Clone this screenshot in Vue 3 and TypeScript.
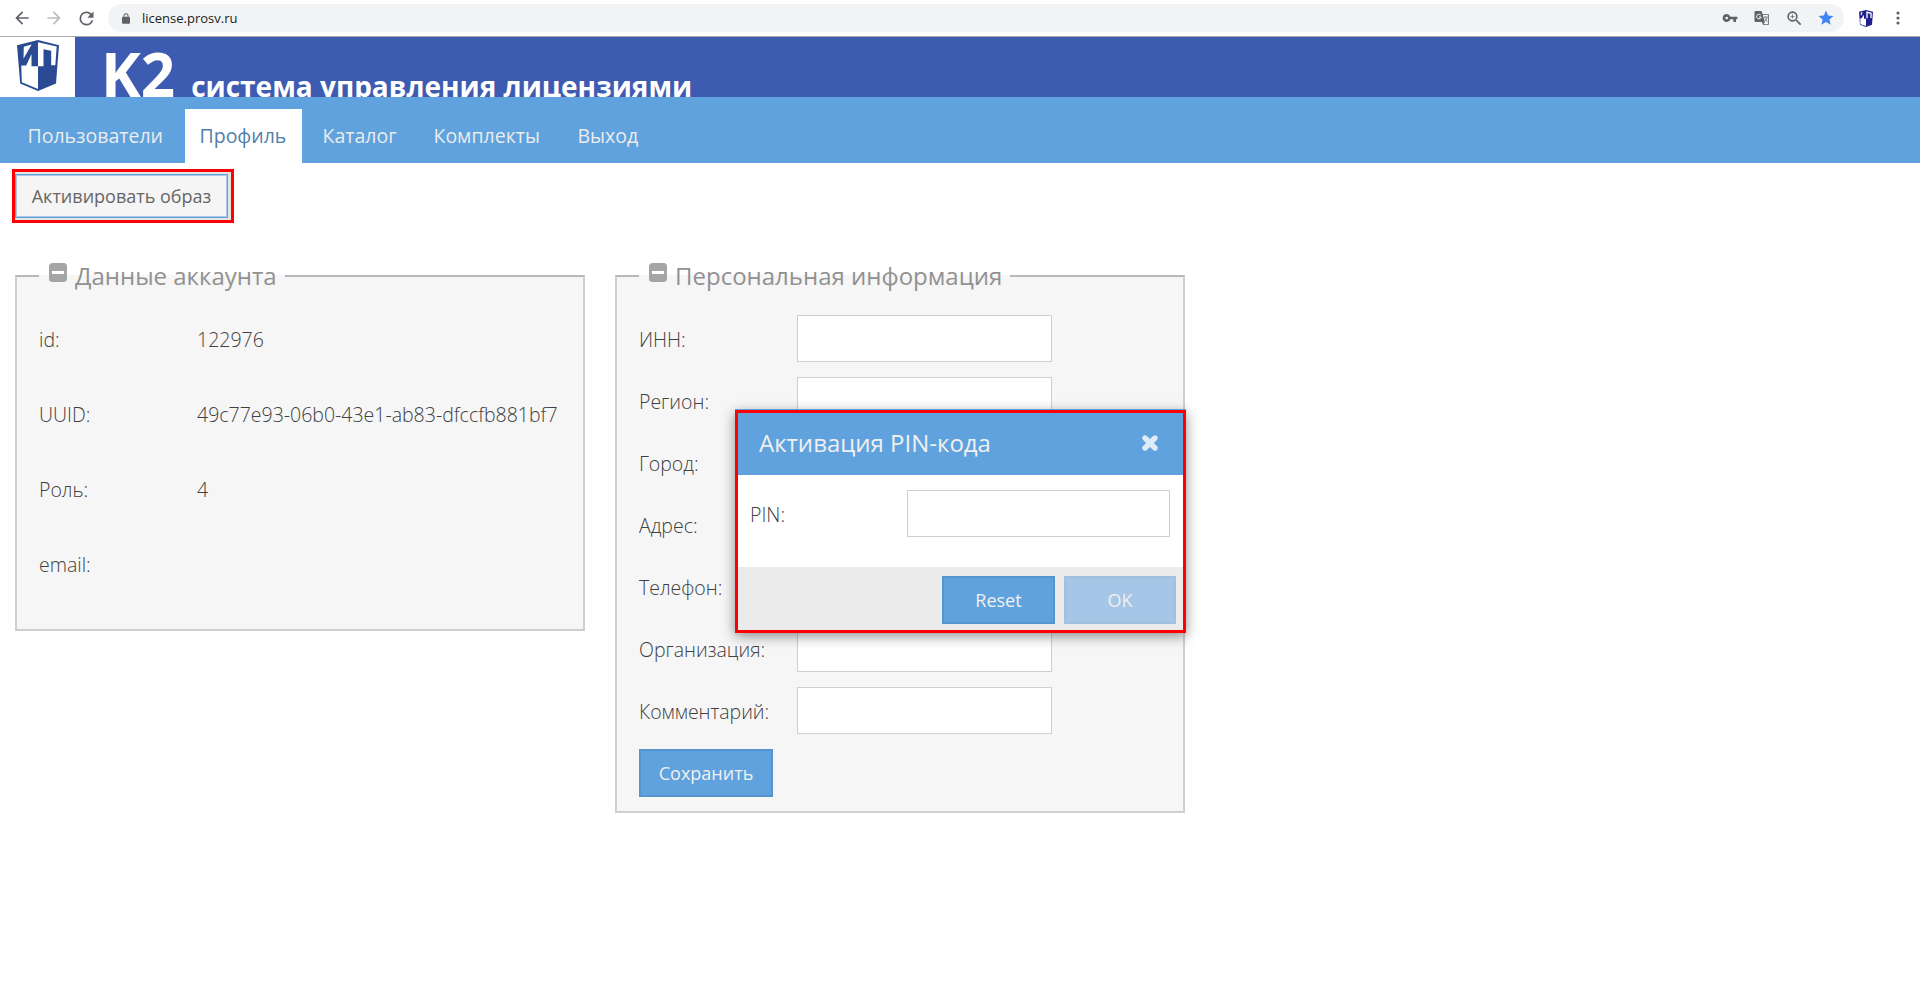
<script setup lang="ts">
interface Row {
  label: string
  value: string
}

const tabs: string[] = ['Пользователи', 'Профиль', 'Каталог', 'Комплекты', 'Выход']
const activeTab = 'Профиль'

const account: Row[] = [
  { label: 'id:', value: '122976' },
  { label: 'UUID:', value: '49c77e93-06b0-43e1-ab83-dfccfb881bf7' },
  { label: 'Роль:', value: '4' },
  { label: 'email:', value: '' },
]

const fields: string[] = ['ИНН:', 'Регион:', 'Город:', 'Адрес:', 'Телефон:', 'Организация:', 'Комментарий:']
</script>

<template>
  <div class="page">
    <div class="browser">
      <svg class="ic back" viewBox="0 0 24 24"><path d="M20 11H7.83l5.59-5.59L12 4l-8 8 8 8 1.41-1.41L7.83 13H20v-2z" /></svg>
      <svg class="ic fwd" viewBox="0 0 24 24"><path d="M4 11h12.17l-5.59-5.59L12 4l8 8-8 8-1.41-1.41L16.17 13H4v-2z" /></svg>
      <svg class="ic reload" viewBox="0 0 24 24"><path d="M17.65 6.35A7.96 7.96 0 0 0 12 4a8 8 0 1 0 7.73 10h-2.08A6 6 0 1 1 12 6c1.66 0 3.14.69 4.22 1.78L13 11h7V4l-2.35 2.35z" /></svg>
      <div class="omnibox">
        <svg class="lock" viewBox="0 0 16 21"><path d="M14 7h-1V5A5 5 0 0 0 3 5v2H2a2 2 0 0 0-2 2v10a2 2 0 0 0 2 2h12a2 2 0 0 0 2-2V9a2 2 0 0 0-2-2zM4.900 7V5a3.100 3.100 0 0 1 6.200 0v2z" /></svg>
        <span class="url">license.prosv.ru</span>
        <svg class="ext key" viewBox="0 0 24 24"><path d="M12.65 10A5.99 5.99 0 0 0 7 6a6 6 0 1 0 5.650 8H17v4h4v-4h2v-4H12.650zM7 14a2 2 0 1 1 0-4 2 2 0 0 1 0 4z" /></svg>
        <svg class="ext translate" viewBox="0 0 16 16">
          <path d="M1.500 1h6l1 3H14a1 1 0 0 1 1 1v9a1 1 0 0 1-1 1H9l-1-3H1.500a1 1 0 0 1-1-1V2a1 1 0 0 1 1-1z" />
          <path d="M8.900 4.800h5.300v9.400H9.500l1.300-2z" fill="#f1f3f4" />
          <path d="M6.700 5.100A2.300 2.300 0 1 0 7.200 7H5" fill="none" stroke="#f1f3f4" stroke-width="1" />
          <path d="M10 7.200h3.800M11.900 6.200v1M13.100 7.500c-.3 1.600-1.300 2.800-2.500 3.500M10.800 8.500c.5 1 1.500 2.200 2.700 3" fill="none" stroke="#5f6368" stroke-width=".8" />
        </svg>
        <svg class="ext zoom" viewBox="0 0 24 24"><path d="M15.500 14h-.79l-.28-.27A6.500 6.500 0 1 0 13.730 14.430l.27.280v.79l5 4.990L20.490 19zM9.500 14a4.500 4.500 0 1 1 0-9 4.500 4.500 0 0 1 0 9zM12 10h-2v2H9v-2H7V9h2V7h1v2h2z" /></svg>
        <svg class="ext star" viewBox="0 0 24 24"><path d="M12 17.270 18.180 21l-1.640-7.030L22 9.240l-7.190-.61L12 2 9.190 8.630 2 9.240l5.460 4.730L5.820 21z" /></svg>
      </div>
      <svg class="shield-small" viewBox="0 0 42 51">
        <path d="M0 5 21 0l21 5-3 39-18 7-18-7z" fill="#20208c" />
        <path d="M4 25v18l17 5V26h-6V14L8 25zM5 8l6-2-5 13zM22 4l16 4v16h-4V11l-8-1v15h-4z" fill="#fff" />
      </svg>
      <svg class="dots" viewBox="0 0 4 14"><circle cx="2" cy="2" r="1.600" /><circle cx="2" cy="7" r="1.600" /><circle cx="2" cy="12" r="1.600" /></svg>
    </div>

    <header class="header">
      <div class="logo">
        <svg class="shield" viewBox="0 0 42 51">
          <path d="M0 5.200 21 0l21 5.200-3 38.300L21 51 3.200 43.500z" fill="#2a4b94" />
          <path d="M4.300 25.400H9.200L14.500 14v12.300H21V49L4.800 42.300zM6.800 6.700 14.600 4.600 6.500 18.700z" fill="#fff" />
          <path d="M21 2.300 39.700 6.600 38.300 25.300H34.200V10.800L26.500 9.300V26.300H21z" fill="#fff" />
        </svg>
      </div>
      <h1 class="brand"><span class="k2">K2</span><span class="tagline">система управления лицензиями</span></h1>
    </header>

    <nav class="nav">
      <a v-for="tab in tabs" :key="tab" class="tab" :class="{ active: tab === activeTab }">{{ tab }}</a>
    </nav>

    <main class="main">
      <div class="highlight">
        <button class="activate">Активировать образ</button>
      </div>

      <div class="panels">
        <fieldset class="panel account">
          <legend>
            <svg class="toggle" viewBox="0 0 18 19"><rect width="18" height="19" rx="3.500" fill="#a5a5a5" /><rect x="3" y="8" width="12" height="3" fill="#fff" /></svg>
            <span>Данные аккаунта</span>
          </legend>
          <div v-for="row in account" :key="row.label" class="row">
            <span class="label">{{ row.label }}</span>
            <span class="value">{{ row.value }}</span>
          </div>
        </fieldset>

        <fieldset class="panel personal">
          <legend>
            <svg class="toggle" viewBox="0 0 18 19"><rect width="18" height="19" rx="3.500" fill="#a5a5a5" /><rect x="3" y="8" width="12" height="3" fill="#fff" /></svg>
            <span>Персональная информация</span>
          </legend>
          <div v-for="field in fields" :key="field" class="row">
            <label class="label">{{ field }}</label>
            <input class="input" type="text" />
          </div>
          <button class="btn save">Сохранить</button>
        </fieldset>
      </div>
    </main>

    <div class="dialog">
      <div class="dialog-head">
        <span>Активация PIN-кода</span>
        <svg class="close" viewBox="0 0 18 18"><path d="M4 4 14 14M14 4 4 14" stroke="#dfebf7" stroke-width="5.400" stroke-linecap="round" /></svg>
      </div>
      <div class="dialog-body">
        <label class="label">PIN:</label>
        <input class="input" type="text" />
      </div>
      <div class="dialog-foot">
        <button class="btn">Reset</button>
        <button class="btn disabled">OK</button>
      </div>
    </div>
  </div>
</template>

<style>
body {
  margin: 0;
  background: #fff;
}
</style>

<style scoped>
.page {
  width: 1920px;
  height: 1006px;
  overflow: hidden;
  position: relative;
  font-family: 'Open Sans', 'Noto Sans', sans-serif;
  color: #404040;
}
.page * {
  box-sizing: border-box;
}
.browser {
  height: 37px;
  display: flex;
  align-items: center;
  border-bottom: 1px solid #a9a9a9;
  background: #fff;
}
svg {
  display: block;
  flex: none;
}
.ic {
  width: 20px;
  height: 20px;
  fill: #5f6368;
}
.back {
  margin-left: 12px;
}
.fwd {
  margin-left: 12px;
  fill: #babcbe;
}
.reload {
  margin-left: 12px;
  width: 21px;
  height: 21px;
}
.omnibox {
  margin-left: 11px;
  width: 1736px;
  height: 28px;
  border-radius: 14px;
  background: #f1f3f4;
  display: flex;
  align-items: center;
  padding: 0 12px 0 14px;
}
.lock {
  width: 8px;
  height: 11px;
  fill: #5f6368;
}
.url {
  flex: 1;
  margin-left: 12px;
  font-size: 13px;
  line-height: 18px;
  color: #202124;
}
.ext {
  width: 16px;
  height: 16px;
  margin-left: 16px;
  fill: #5f6368;
}
.zoom {
  width: 19px;
  height: 19px;
  margin-left: 15px;
  margin-right: -2px;
}
.star {
  width: 18px;
  height: 18px;
  margin-left: 15px;
  margin-right: -3px;
  fill: #4285f4;
}
.shield-small {
  width: 14px;
  height: 17px;
  margin-left: 15px;
}
.dots {
  width: 4px;
  height: 14px;
  margin-left: 23px;
  fill: #5f6368;
}
.header {
  height: 60px;
  display: flex;
  background: #3d5bb1;
  overflow: hidden;
}
.logo {
  width: 75px;
  background: #fff;
  padding: 3px 0 0 17px;
}
.shield {
  width: 42px;
  height: 51px;
}
.brand {
  margin: 0 0 0 26px;
  color: #fff;
  font-weight: 700;
  line-height: 74px;
  white-space: nowrap;
}
.k2 {
  font-size: 60px;
}
.tagline {
  font-size: 28px;
  margin-left: 16px;
}
.nav {
  height: 66px;
  background: #5fa2dd;
  display: flex;
  padding: 12px 0 0 13px;
  gap: 6px;
}
.tab {
  padding-left: 14.5px;
  font-size: 19.5px;
  line-height: 54px;
  color: #ececec;
  white-space: nowrap;
}
.tab:nth-child(1) {
  width: 166px;
}
.tab:nth-child(2) {
  width: 117px;
}
.tab:nth-child(3) {
  width: 105px;
}
.tab:nth-child(4) {
  width: 138px;
}
.tab.active {
  background: #fff;
  color: #5080ab;
}
.highlight {
  width: 222px;
  height: 54px;
  margin: 6px 0 0 12px;
  border: 3px solid #f00;
  background: #e4e4e4;
  display: flex;
  padding: 2px 3px 2px 0;
}
.activate {
  width: 213px;
  height: 44px;
  border: 1px solid #5fa2dd;
  box-shadow: inset 0 0 0 1px #a8c8e5;
  background: #f5f5f5;
  color: #666;
  font: 18px 'Open Sans', sans-serif;
  padding: 0;
  white-space: nowrap;
}
.panels {
  display: flex;
  gap: 30px;
  padding: 35px 0 0 15px;
}
.panel {
  width: 570px;
  margin: 0;
  border: 2px solid #cfcfcf;
  border-top-color: #b9b9b9;
  background: #f6f6f6;
  padding: 0 22px;
  min-width: 0;
}
.account {
  height: 373px;
}
.personal {
  height: 555px;
}
legend {
  height: 36px;
  padding: 0 8px 0 10px;
  display: flex;
  align-items: flex-start;
  font-size: 24px;
  line-height: 36px;
  color: #919191;
}
.toggle {
  width: 18px;
  height: 19px;
  margin: 5px 8px 0 0;
}
.row {
  display: flex;
  align-items: center;
}
.label,
.value {
  font-size: 19.5px;
  font-weight: 300;
  line-height: 47px;
  padding-top: 2px;
  white-space: nowrap;
}
.label {
  width: 158px;
  flex: none;
}
.account .row {
  height: 47px;
  margin-bottom: 28px;
}
.account .row:first-of-type,
.personal .row:first-of-type {
  margin-top: 21px;
}
.personal .row {
  height: 47px;
  margin-bottom: 15px;
}
.input {
  width: 255px;
  height: 47px;
  border: 1px solid #cfcfcf;
  background: #fff;
  padding: 0;
  outline: none;
}
.btn {
  height: 48px;
  width: 113px;
  border: 2px solid #5595cd;
  background: #5fa2dd;
  color: #f0f0f0;
  font: 18px 'Open Sans', sans-serif;
  padding: 0;
}
.save {
  width: 134px;
  display: block;
}
.dialog {
  position: absolute;
  left: 735px;
  top: 410px;
  width: 451px;
  height: 223px;
  border: 3px solid #f00;
  background: #fff;
  box-shadow: 0 -1px 0 #5fa2dd, 0 3px 12px rgba(0, 0, 0, 0.45);
}
.dialog-head {
  height: 62px;
  background: #5fa2dd;
  display: flex;
  align-items: center;
  justify-content: space-between;
  padding: 0 24px 2px 21px;
  font-size: 24px;
  line-height: 36px;
  color: #f0f0f0;
}
.close {
  width: 18px;
  height: 18px;
}
.dialog-body {
  height: 92px;
  display: flex;
  padding: 15px 0 0 12px;
}
.dialog-body .label {
  width: 157px;
  padding-top: 1px;
}
.dialog-body .input {
  width: 263px;
}
.dialog-foot {
  height: 63px;
  background: #ebebeb;
  display: flex;
  justify-content: flex-end;
  gap: 9px;
  padding: 9px 7px 0 0;
}
.disabled {
  width: 112px;
  background: #a5c6e6;
  border-color: #9fc0df;
}
</style>
